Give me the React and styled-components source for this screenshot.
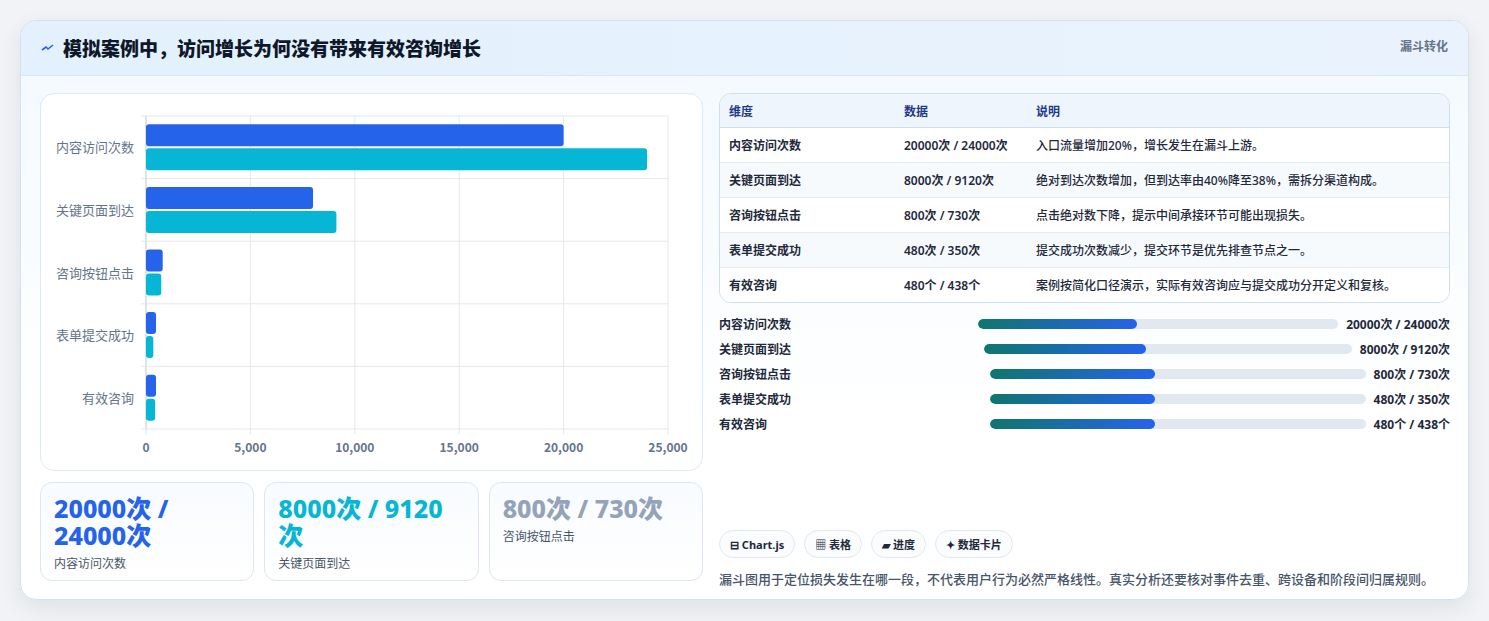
import React from 'react';
import styled, { createGlobalStyle } from 'styled-components';

const Global = createGlobalStyle`
  body {
    margin: 0;
    background: #f1f3f6;
    font-family: "Noto Sans", "Noto Sans CJK SC", sans-serif;
    color: #1e293b;
  }
`;

const Page = styled.div`
  padding: 20px 20px 21px 20px;
  height: 621px;
  box-sizing: border-box;
`;

const Card = styled.div`
  background: linear-gradient(180deg, #f2f9ff 0%, #ffffff 70%);
  border: 1px solid #cfe3f1;
  border-radius: 16px;
  box-shadow: 0 8px 24px rgba(15, 23, 42, 0.08);
  overflow: hidden;
  height: 580px;
  box-sizing: border-box;
`;

const Header = styled.div`
  height: 55px;
  background: linear-gradient(90deg, #e2f1fd, #eaf3fd);
  border-bottom: 1px solid #d6e8f6;
  display: flex;
  align-items: center;
  justify-content: space-between;
  padding: 0 20px;
  box-sizing: border-box;
`;

const Title = styled.h1`
  margin: 0;
  font-size: 19px;
  font-weight: 800;
  color: #0f172a;
  display: flex;
  align-items: center;
  gap: 8px;
`;

const Badge = styled.span`
  font-size: 12px;
  font-weight: 700;
  color: #64748b;
  align-self: flex-start;
  margin-top: 16px;
`;

const Body = styled.div`
  display: grid;
  grid-template-columns: 663px 1fr;
  gap: 16px;
  padding: 17px 18px 0 19px;
`;

const Left = styled.div`
  display: flex;
  flex-direction: column;
  gap: 11px;
`;

const ChartBox = styled.div`
  background: #fff;
  border: 1px solid #dde9f3;
  border-radius: 14px;
  height: 378px;
  box-sizing: border-box;
`;

const Stats = styled.div`
  display: grid;
  grid-template-columns: repeat(3, 1fr);
  gap: 10px;
`;

const Stat = styled.div`
  background: linear-gradient(180deg, #f8fbff, #ffffff);
  border: 1px solid #dbe7f4;
  border-radius: 12px;
  height: 99px;
  box-sizing: border-box;
  padding: 12px 13px;
`;

const StatValue = styled.div`
  font-size: 25px;
  font-weight: 800;
  line-height: 27px;
  color: ${(p) => p.$color};
`;

const StatLabel = styled.div`
  font-size: 12px;
  color: #475569;
  margin-top: 5px;
`;

const Right = styled.div`
  display: flex;
  flex-direction: column;
`;

const Table = styled.table`
  width: 100%;
  border-collapse: separate;
  border-spacing: 0;
  border: 1px solid #cfdeeb;
  border-radius: 12px;
  overflow: hidden;
  font-size: 12px;
`;

const Th = styled.th`
  text-align: left;
  font-weight: 700;
  color: #1e3a8a;
  background: #eef5fc;
  height: 33px;
  padding: 0 9px;
  border-bottom: 1px solid #cfdeeb;
  width: ${(p) => p.$w || 'auto'};
`;

const Td = styled.td`
  height: 34px;
  padding: 0 9px;
  color: #1e293b;
  font-weight: ${(p) => (p.$bold ? 600 : 500)};
  background: ${(p) => (p.$alt ? '#f7fafd' : '#ffffff')};
  border-top: ${(p) => (p.$first ? 'none' : '1px solid #e2eaf2')};
`;

const Bars = styled.div`
  display: flex;
  flex-direction: column;
  gap: 7px;
  margin-top: 12px;
`;

const BarRow = styled.div`
  display: grid;
  grid-template-columns: 1fr 1.43fr auto;
  gap: 8px;
  align-items: center;
  font-size: 12px;
  font-weight: 600;
  height: 18px;
`;

const Track = styled.div`
  height: 10px;
  border-radius: 5px;
  background: #e2e8f0;
  overflow: hidden;
`;

const Fill = styled.div`
  height: 100%;
  border-radius: 5px;
  background: linear-gradient(90deg, #0f766e, #2563eb);
`;

const BarValue = styled.span`
  font-weight: 700;
  color: #1e293b;
`;

const Tags = styled.div`
  display: flex;
  gap: 9px;
  margin-top: 97px;
`;

const Tag = styled.span`
  height: 28px;
  box-sizing: border-box;
  padding: 0 10px;
  border: 1px solid #e2e8f0;
  border-radius: 14px;
  background: #fbfcfe;
  font-size: 11px;
  font-weight: 700;
  color: #1e293b;
  display: flex;
  align-items: center;
`;

const Note = styled.p`
  margin: 11px 0 0;
  font-size: 13px;
  color: #475569;
  font-weight: 500;
`;

const rows = [
  ['内容访问次数', '20000次 / 24000次', '入口流量增加20%，增长发生在漏斗上游。', 20000, 24000],
  ['关键页面到达', '8000次 / 9120次', '绝对到达次数增加，但到达率由40%降至38%，需拆分渠道构成。', 8000, 9120],
  ['咨询按钮点击', '800次 / 730次', '点击绝对数下降，提示中间承接环节可能出现损失。', 800, 730],
  ['表单提交成功', '480次 / 350次', '提交成功次数减少，提交环节是优先排查节点之一。', 480, 350],
  ['有效咨询', '480个 / 438个', '案例按简化口径演示，实际有效咨询应与提交成功分开定义和复核。', 480, 438],
];

function Chart() {
  const x0 = 105, x1 = 627, y0 = 22, y1 = 335;
  const sc = (x1 - x0) / 25000;
  const band = (y1 - y0) / 5;
  return (
    <svg width="661" height="376" style={{ display: 'block' }} fontFamily='"Noto Sans CJK SC", sans-serif'>
      {[0, 1, 2, 3, 4, 5].map((i) => (
        <line key={i} x1={x0 + i * (x1 - x0) / 5} x2={x0 + i * (x1 - x0) / 5} y1={y0} y2={y1 + 5} stroke="#e5e7eb" />
      ))}
      {[0, 1, 2, 3, 4, 5].map((i) => (
        <line key={'h' + i} x1={x0 - 5} x2={x1} y1={y0 + i * band} y2={y0 + i * band} stroke="#e5e7eb" />
      ))}
      <line x1={x0} x2={x0} y1={y0} y2={y1} stroke="#cbd5e1" />
      {rows.map((r, i) => {
        const cy = y0 + i * band + band / 2;
        return (
          <g key={r[0]}>
            <rect x={x0} y={cy - 23} width={r[3] * sc} height={22} rx="3" fill="#2563eb" />
            <rect x={x0} y={cy + 1} width={r[4] * sc} height={22} rx="3" fill="#06b6d4" />
            <text x={x0 - 12} y={cy + 5} textAnchor="end" fontSize="13" fill="#64748b">{r[0]}</text>
          </g>
        );
      })}
      {['0', '5,000', '10,000', '15,000', '20,000', '25,000'].map((t, i) => (
        <text key={t} x={x0 + i * (x1 - x0) / 5} y={358} textAnchor="middle" fontSize="12" fontWeight="700" fill="#64748b">{t}</text>
      ))}
    </svg>
  );
}

export default function App() {
  return (
    <Page>
      <Global />
      <Card>
        <Header>
          <Title>
            <svg width="14" height="14" viewBox="0 0 14 14">
              <path d="M1 9 L5 6 L7 8 L12 4" stroke="#2563eb" strokeWidth="1.6" fill="none" />
            </svg>
            模拟案例中，访问增长为何没有带来有效咨询增长
          </Title>
          <Badge>漏斗转化</Badge>
        </Header>
        <Body>
          <Left>
            <ChartBox>
              <Chart />
            </ChartBox>
            <Stats>
              <Stat>
                <StatValue $color="#2563eb">20000次 / 24000次</StatValue>
                <StatLabel>内容访问次数</StatLabel>
              </Stat>
              <Stat>
                <StatValue $color="#06b6d4">8000次 / 9120次</StatValue>
                <StatLabel>关键页面到达</StatLabel>
              </Stat>
              <Stat>
                <StatValue $color="#94a3b8">800次 / 730次</StatValue>
                <StatLabel>咨询按钮点击</StatLabel>
              </Stat>
            </Stats>
          </Left>
          <Right>
            <Table>
              <thead>
                <tr>
                  <Th $w="157px">维度</Th>
                  <Th $w="114px">数据</Th>
                  <Th>说明</Th>
                </tr>
              </thead>
              <tbody>
                {rows.map((r, i) => (
                  <tr key={r[0]}>
                    <Td $bold $alt={i % 2 === 1} $first={i === 0}>{r[0]}</Td>
                    <Td $bold $alt={i % 2 === 1} $first={i === 0}>{r[1]}</Td>
                    <Td $alt={i % 2 === 1} $first={i === 0}>{r[2]}</Td>
                  </tr>
                ))}
              </tbody>
            </Table>
            <Bars>
              {rows.map((r) => (
                <BarRow key={r[0]}>
                  <span>{r[0]}</span>
                  <Track><Fill style={{ width: '44%' }} /></Track>
                  <BarValue>{r[1]}</BarValue>
                </BarRow>
              ))}
            </Bars>
            <Tags>
              <Tag>⊟ Chart.js</Tag>
              <Tag>▦ 表格</Tag>
              <Tag>▰ 进度</Tag>
              <Tag>✦ 数据卡片</Tag>
            </Tags>
            <Note>漏斗图用于定位损失发生在哪一段，不代表用户行为必然严格线性。真实分析还要核对事件去重、跨设备和阶段间归属规则。</Note>
          </Right>
        </Body>
      </Card>
    </Page>
  );
}
